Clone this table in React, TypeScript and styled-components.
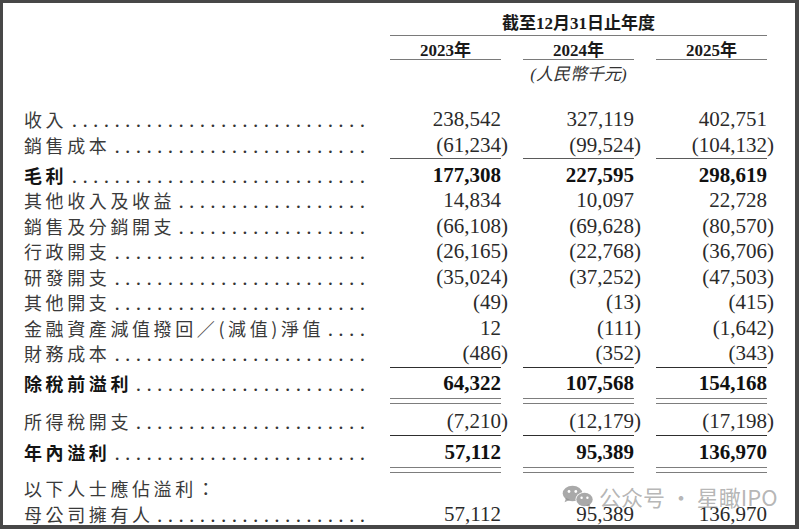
import React from "react";
import styled, { createGlobalStyle, css } from "styled-components";

const Global = createGlobalStyle`
  html, body { margin: 0; padding: 0; background: #fff; }
  body { width: 799px; height: 529px; overflow: hidden; }
`;

const Frame = styled.div`
  position: relative;
  box-sizing: border-box;
  width: 799px;
  height: 529px;
  border-style: solid;
  border-color: #474747;
  border-width: 3px 4px 4px 3px;
  background: #fff;
  padding-left: 21px;
  overflow: hidden;
`;

const cols = css`
  display: grid;
  grid-template-columns: 344px 111px 111px 111px;
  column-gap: 22px;
`;

const HeadRow = styled.div`
  ${cols}
`;

const Title = styled.div`
  grid-column: 2 / 5;
  text-align: center;
  padding-top: 6px;
  height: 26px;
  line-height: 26px;
  border-bottom: 1px solid #7a7a7a;
  font: 700 17px "Liberation Serif", "Noto Sans CJK TC", serif;
  color: #1a1a1a;
`;

const Year = styled.div`
  text-align: center;
  height: 23px;
  line-height: 23px;
  border-bottom: 1px solid #7a7a7a;
  font: 700 17px "Liberation Serif", "Noto Sans CJK TC", serif;
  color: #1a1a1a;
`;

const UnitRow = styled.div`
  ${cols}
  margin-bottom: 16.25px;
`;

const Unit = styled.div`
  grid-column: 3;
  text-align: center;
  height: 31px;
  line-height: 31px;
  font: italic 400 17px "Liberation Serif", "Noto Sans CJK TC", serif;
  color: #333;
`;

const Row = styled.div`
  ${cols}
  height: 25.5px;
  line-height: 25.5px;
`;

const LabelCell = styled.div`
  display: flex;
  align-items: baseline;
  justify-content: space-between;
  padding-right: 3px;
  min-width: 0;
`;

const LabelText = styled.span<{ $bold?: boolean }>`
  flex: none;
  font-family: "Noto Sans CJK TC", "Noto Sans CJK SC", sans-serif;
  font-size: 18px;
  letter-spacing: 3.6px;
  font-weight: ${(p) => (p.$bold ? 700 : 400)};
  color: ${(p) => (p.$bold ? "#141414" : "#3a3a3a")};
`;

const Leader = styled.span`
  flex: none;
  white-space: pre;
  font: 400 21.33px "Liberation Serif", serif;
  color: #333;
`;

const Num = styled.div<{ $bold?: boolean }>`
  text-align: right;
  white-space: nowrap;
  font-family: "Liberation Serif", serif;
  font-size: 21px;
  font-weight: ${(p) => (p.$bold ? 700 : 400)};
  color: ${(p) => (p.$bold ? "#111" : "#2a2a2a")};
`;

const Close = styled.span`
  margin-right: -7px;
`;

const RuleRow = styled.div<{ $h: number }>`
  ${cols}
  height: ${(p) => p.$h}px;
  align-items: start;
`;

const RuleCell = styled.div<{ $double?: boolean; $dark?: boolean }>`
  box-sizing: content-box;
  margin-top: ${(p) => (p.$double ? 1.25 : 0)}px;
  height: ${(p) => (p.$double ? 4 : 0)}px;
  border-top: 1px solid ${(p) => (p.$dark ? "#2e2e2e" : p.$double ? "#7d7d7d" : "#5a5a5a")};
  border-bottom: ${(p) => (p.$double ? "1px solid #7d7d7d" : "none")};
`;

const Blank = styled.div``;

const Watermark = styled.div`
  position: absolute;
  left: 559px;
  top: 482px;
  display: flex;
  align-items: center;
  gap: 6px;
  pointer-events: none;
`;

const WmText = styled.span`
  font: 400 22px "Noto Sans CJK SC", "Noto Sans", sans-serif;
  color: rgba(135, 135, 135, 0.62);
  white-space: nowrap;
  line-height: 22px;
`;

type DataRow =
  | { kind: "row"; label: string; bold?: boolean; noDots?: boolean; v: string[] }
  | { kind: "rule"; type: "single" | "double"; h: number; dark?: boolean };

const rows: DataRow[] = [
  { kind: "row", label: "收入", v: ["238,542", "327,119", "402,751"] },
  { kind: "row", label: "銷售成本", v: ["(61,234)", "(99,524)", "(104,132)"] },
  { kind: "rule", type: "single", h: 4.5 },
  { kind: "row", label: "毛利", bold: true, v: ["177,308", "227,595", "298,619"] },
  { kind: "row", label: "其他收入及收益", v: ["14,834", "10,097", "22,728"] },
  { kind: "row", label: "銷售及分銷開支", v: ["(66,108)", "(69,628)", "(80,570)"] },
  { kind: "row", label: "行政開支", v: ["(26,165)", "(22,768)", "(36,706)"] },
  { kind: "row", label: "研發開支", v: ["(35,024)", "(37,252)", "(47,503)"] },
  { kind: "row", label: "其他開支", v: ["(49)", "(13)", "(415)"] },
  { kind: "row", label: "金融資產減值撥回／(減值)淨值", v: ["12", "(111)", "(1,642)"] },
  { kind: "row", label: "財務成本", v: ["(486)", "(352)", "(343)"] },
  { kind: "rule", type: "single", h: 4.5, dark: true },
  { kind: "row", label: "除稅前溢利", bold: true, v: ["64,322", "107,568", "154,168"] },
  { kind: "rule", type: "double", h: 12.5 },
  { kind: "row", label: "所得稅開支", v: ["(7,210)", "(12,179)", "(17,198)"] },
  { kind: "rule", type: "single", h: 5.5, dark: true },
  { kind: "row", label: "年內溢利", bold: true, v: ["57,112", "95,389", "136,970"] },
  { kind: "rule", type: "double", h: 10.5 },
  { kind: "row", label: "以下人士應佔溢利：", noDots: true, v: ["", "", ""] },
  { kind: "row", label: "母公司擁有人", v: ["57,112", "95,389", "136,970"] },
];

// label cell inner width (344 - 3px padding) and approximate glyph advances
const CELL = 341;
const DOT_HALF = 21.33 / 4; // width of "." and of " " in Liberation Serif

function labelWidth(s: string) {
  let w = 0;
  for (const ch of s) {
    w += ch === "(" || ch === ")" ? 9.8 : 21.6;
  }
  return w;
}

function leaderFor(label: string) {
  const avail = CELL - labelWidth(label) + 1.5;
  const k = Math.max(0, Math.floor((avail / DOT_HALF + 1) / 2));
  if (k === 0) return "";
  return "." + " .".repeat(k - 1);
}

function Value({ v, bold }: { v: string; bold?: boolean }) {
  if (v.startsWith("(")) {
    return (
      <Num $bold={bold}>
        {v.slice(0, -1)}
        <Close>)</Close>
      </Num>
    );
  }
  return <Num $bold={bold}>{v}</Num>;
}

function WeChatIcon() {
  return (
    <svg width="31" height="22" viewBox="0 0 31 22" aria-hidden="true">
      <g fill="rgba(140,140,140,0.75)">
        <ellipse cx="10.5" cy="8.5" rx="9.8" ry="7.8" />
        <path d="M4 13 L2.6 17.2 L8 14.8 Z" />
      </g>
      <g>
        <ellipse cx="22.5" cy="14.5" rx="9" ry="7.6" fill="#fff" />
        <ellipse cx="22.5" cy="14.5" rx="8.2" ry="6.8" fill="rgba(140,140,140,0.75)" />
        <path d="M27 19 L28.6 22 L23.8 20.6 Z" fill="rgba(140,140,140,0.75)" />
      </g>
      <g fill="#fff">
        <circle cx="7" cy="6.5" r="1.4" />
        <circle cx="13.8" cy="6.5" r="1.4" />
        <circle cx="19.6" cy="12.8" r="1.2" />
        <circle cx="25.4" cy="12.8" r="1.2" />
      </g>
    </svg>
  );
}

export default function App() {
  return (
    <>
      <Global />
      <Frame>
        <HeadRow>
          <Title>截至12月31日止年度</Title>
        </HeadRow>
        <HeadRow>
          <Blank />
          <Year>2023年</Year>
          <Year>2024年</Year>
          <Year>2025年</Year>
        </HeadRow>
        <UnitRow>
          <Unit>(人民幣千元)</Unit>
        </UnitRow>
        {rows.map((r, i) =>
          r.kind === "rule" ? (
            <RuleRow key={i} $h={r.h}>
              <Blank />
              {[0, 1, 2].map((c) => (
                <RuleCell key={c} $double={r.type === "double"} $dark={r.dark} />
              ))}
            </RuleRow>
          ) : (
            <Row key={i}>
              <LabelCell>
                <LabelText $bold={r.bold}>{r.label}</LabelText>
                {!r.noDots && <Leader>{leaderFor(r.label)}</Leader>}
              </LabelCell>
              {r.v.map((v, c) => (
                <Value key={c} v={v} bold={r.bold} />
              ))}
            </Row>
          )
        )}
        <Watermark>
          <WeChatIcon />
          <WmText>公众号 · 星瞰IPO</WmText>
        </Watermark>
      </Frame>
    </>
  );
}
